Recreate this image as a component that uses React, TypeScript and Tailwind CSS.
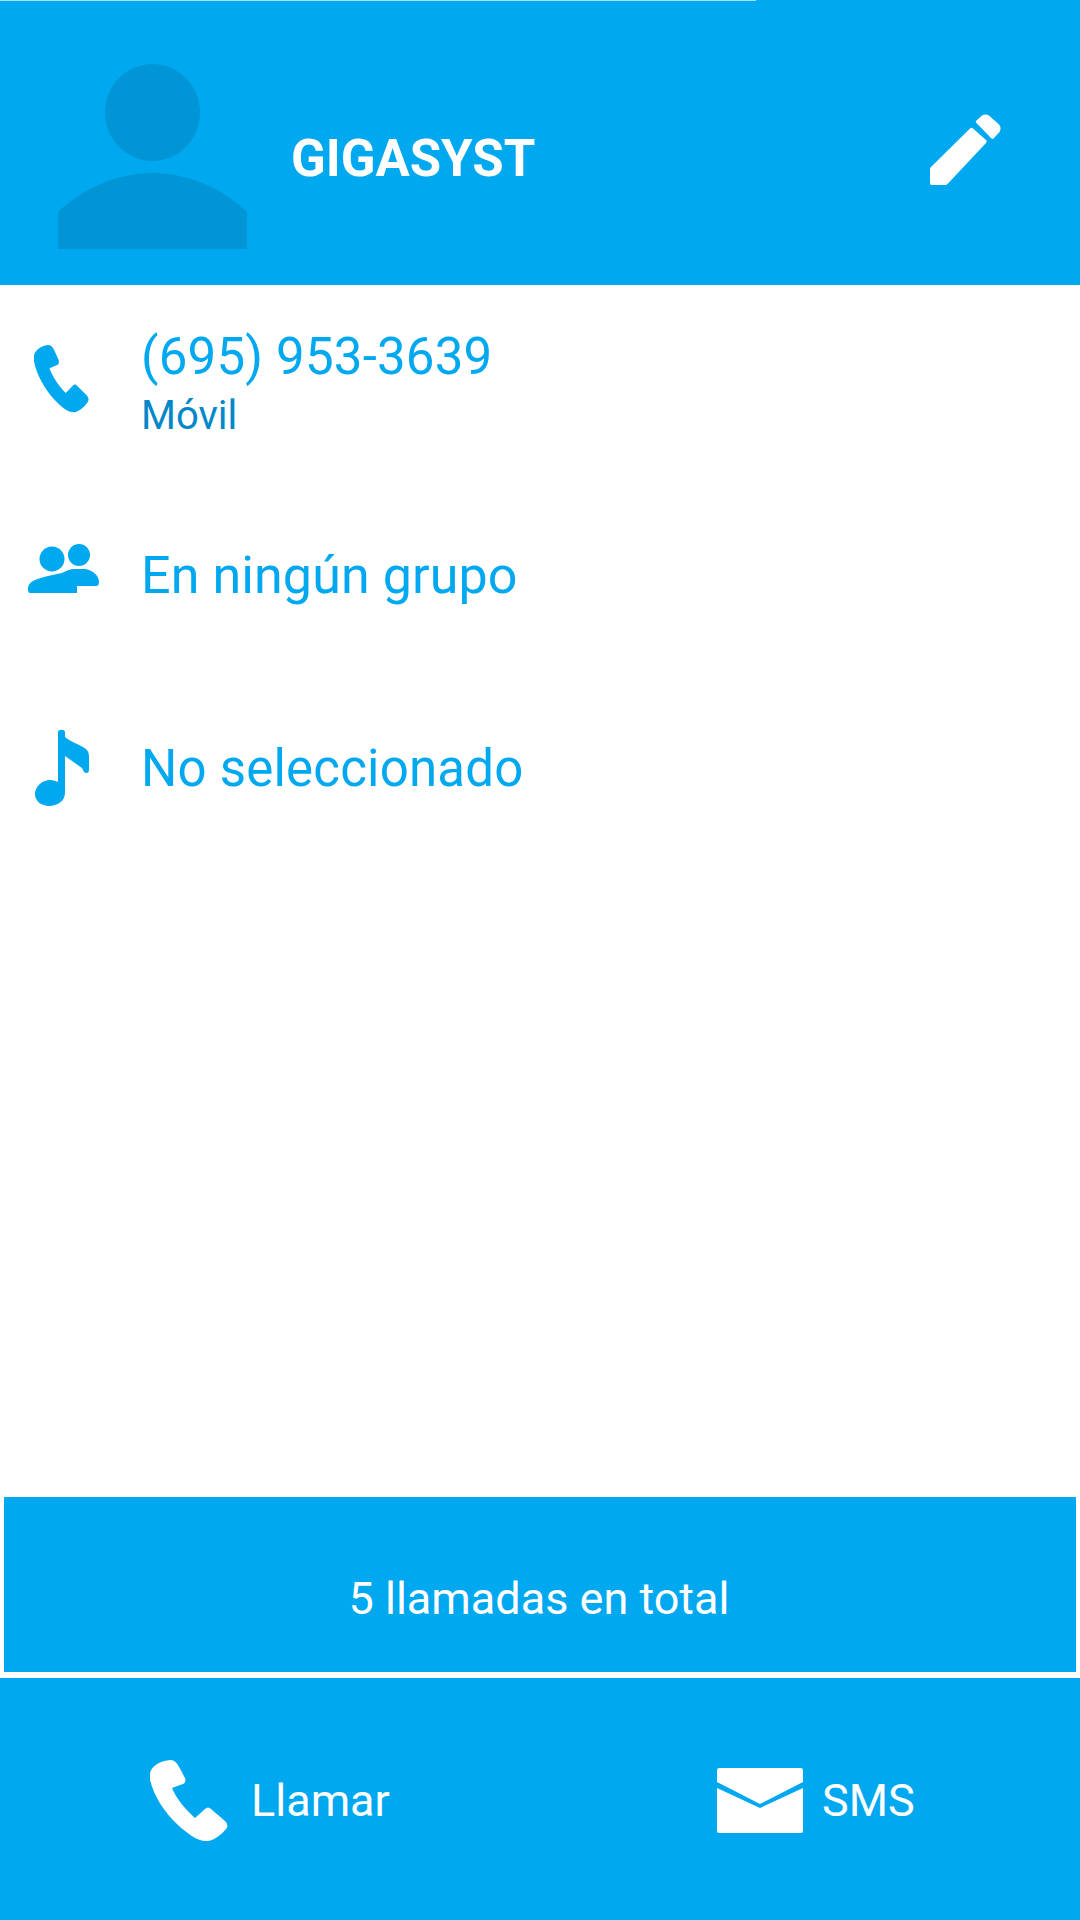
const BLUE = "#00a8f0";

function Avatar() {
  return (
    <svg width="189" height="186" viewBox="0 0 189 186" className="mt-[62px] shrink-0" fill="#0195d6">
      <ellipse cx="94.5" cy="49.5" rx="47.5" ry="48.5" />
      <path d="M0 149C25 125 60 110 94.5 110C129 110 164 125 189 149V186H0Z" />
    </svg>
  );
}

function Pencil() {
  return (
    <svg width="72" height="72" viewBox="0 0 72 72" className="mt-[113px] shrink-0" fill="#fff">
      <path d="M40 14.500a2 2 0 0 1 3 0L56 26a2 2 0 0 1 0 3L17.500 70a3 3 0 0 1-2 1H2a2 2 0 0 1-2-2V55a3 3 0 0 1 1-2Z" />
      <path d="M46.500 6.500L52 1.500C54 0 57 0 59 1.500L69 10.500C71 12.500 71 16 69.500 18L63.500 24.500a1.500 1.500 0 0 1-2 0L46.500 9a1.500 1.500 0 0 1 0-2.500Z" />
    </svg>
  );
}

function PhoneShape({ fill, className, width, height }: { fill: string; className?: string; width: number; height: number }) {
  return (
    <svg width={width} height={height} viewBox="0 0 78 82" preserveAspectRatio="none" className={className} fill={fill}>
      <path d="M0 14C0 8 8 1 20 0C24 0 26 2 28 5L35 18C36 21 35 23 33 24L22 28C26 38 35 49 45 58L55 49C57 47 59 47 61 49L75 61C78 64 78 67 76 69C70 76 64 80 58 81C48 82 38 74 28 65C14 52 4 36 0 20Z" />
    </svg>
  );
}

function Group() {
  return (
    <svg width="71" height="50" viewBox="0 0 71 50" fill={BLUE} className="shrink-0">
      <circle cx="24" cy="15" r="12.500" />
      <circle cx="51" cy="11" r="11" />
      <path d="M0 46C0 42 1 39 5 37C10 34 20 32 34 29C38 27 42 25 47 25H57C64 26 71 31 71 38C71 41 70 42 68 42H49V49H2C1 49 0 48 0 46Z" />
    </svg>
  );
}

function Note() {
  return (
    <svg width="54" height="77" viewBox="0 0 54 77" fill={BLUE} className="shrink-0">
      <path d="M23 3C23 0 30 0 30 3V8C36 13 46 16 51 20C53 22 54 24 54 28V41C54 45 49 45 48 41L47 39L30 27V64C30 72 22 77 14.500 77C6 77 0 72 0 65C0 57 8 51 15 51C18 51 21 52 23 53Z" />
    </svg>
  );
}

function Envelope() {
  return (
    <svg width="86" height="65" viewBox="0 0 86 65" fill="#fff" className="shrink-0">
      <path d="M0 2C0 1 1 0 2 0H84C85 0 86 1 86 2V14L43 36L0 14Z" />
      <path d="M0 20L43 40L86 20V63C86 64 85 65 84 65H2C1 65 0 64 0 63Z" />
    </svg>
  );
}

export default function App() {
  return (
    <div className="w-[1080px] h-[1920px] flex flex-col bg-white font-['Roboto',sans-serif]">
      <header className="h-[285px] bg-[#00a8f0] shrink-0">
        <div className="h-px w-[756px] bg-[#a5e0fb]" />
        <div className="flex items-start pl-[58px]">
          <Avatar />
          <h1 className="ml-[44px] mt-[128px] text-[51px] leading-[60px] font-bold text-white">GIGASYST</h1>
          <div className="flex-1" />
          <div className="pr-[78px]">
            <Pencil />
          </div>
        </div>
      </header>

      <main className="flex-1 flex flex-col pt-[41px] text-[#00a8f0]">
        <div className="flex items-start">
          <div className="w-[141px] pl-[34px] pt-[19px] shrink-0">
            <PhoneShape fill={BLUE} width={55} height={68} />
          </div>
          <div>
            <div className="text-[51px] leading-[61px] tracking-[0.2px]">(695) 953-3639</div>
            <div className="mt-[5px] text-[40px] leading-[47px] text-[#0288c9]">Móvil</div>
          </div>
        </div>

        <div className="flex items-start mt-[105px]">
          <div className="w-[141px] pl-[28px] shrink-0">
            <Group />
          </div>
          <div className="mt-px text-[52px] leading-[61px] tracking-[0.1px]">En ningún grupo</div>
        </div>

        <div className="flex items-start mt-[123px]">
          <div className="w-[141px] pl-[35px] shrink-0">
            <Note />
          </div>
          <div className="mt-[9px] text-[51px] leading-[61px] tracking-[0.2px]">No seleccionado</div>
        </div>
      </main>

      <div className="mx-[4px] h-[175px] bg-[#00a8f0] shrink-0 flex items-center justify-center pt-[28px] pr-[2px] text-[45px] leading-[53px] text-white">
        5 llamadas en total
      </div>

      <footer className="mt-[6px] h-[242px] bg-[#00a8f0] shrink-0 flex text-[45px] leading-[53px] text-white">
        <div className="w-[717px] pl-[150px] pt-[82px] flex items-start shrink-0">
          <PhoneShape fill="#fff" width={78} height={82} />
          <span className="ml-[23px] mt-[14px]">Llamar</span>
        </div>
        <div className="flex items-start pt-[90px]">
          <Envelope />
          <span className="ml-[19px] mt-[6px]">SMS</span>
        </div>
      </footer>
    </div>
  );
}
